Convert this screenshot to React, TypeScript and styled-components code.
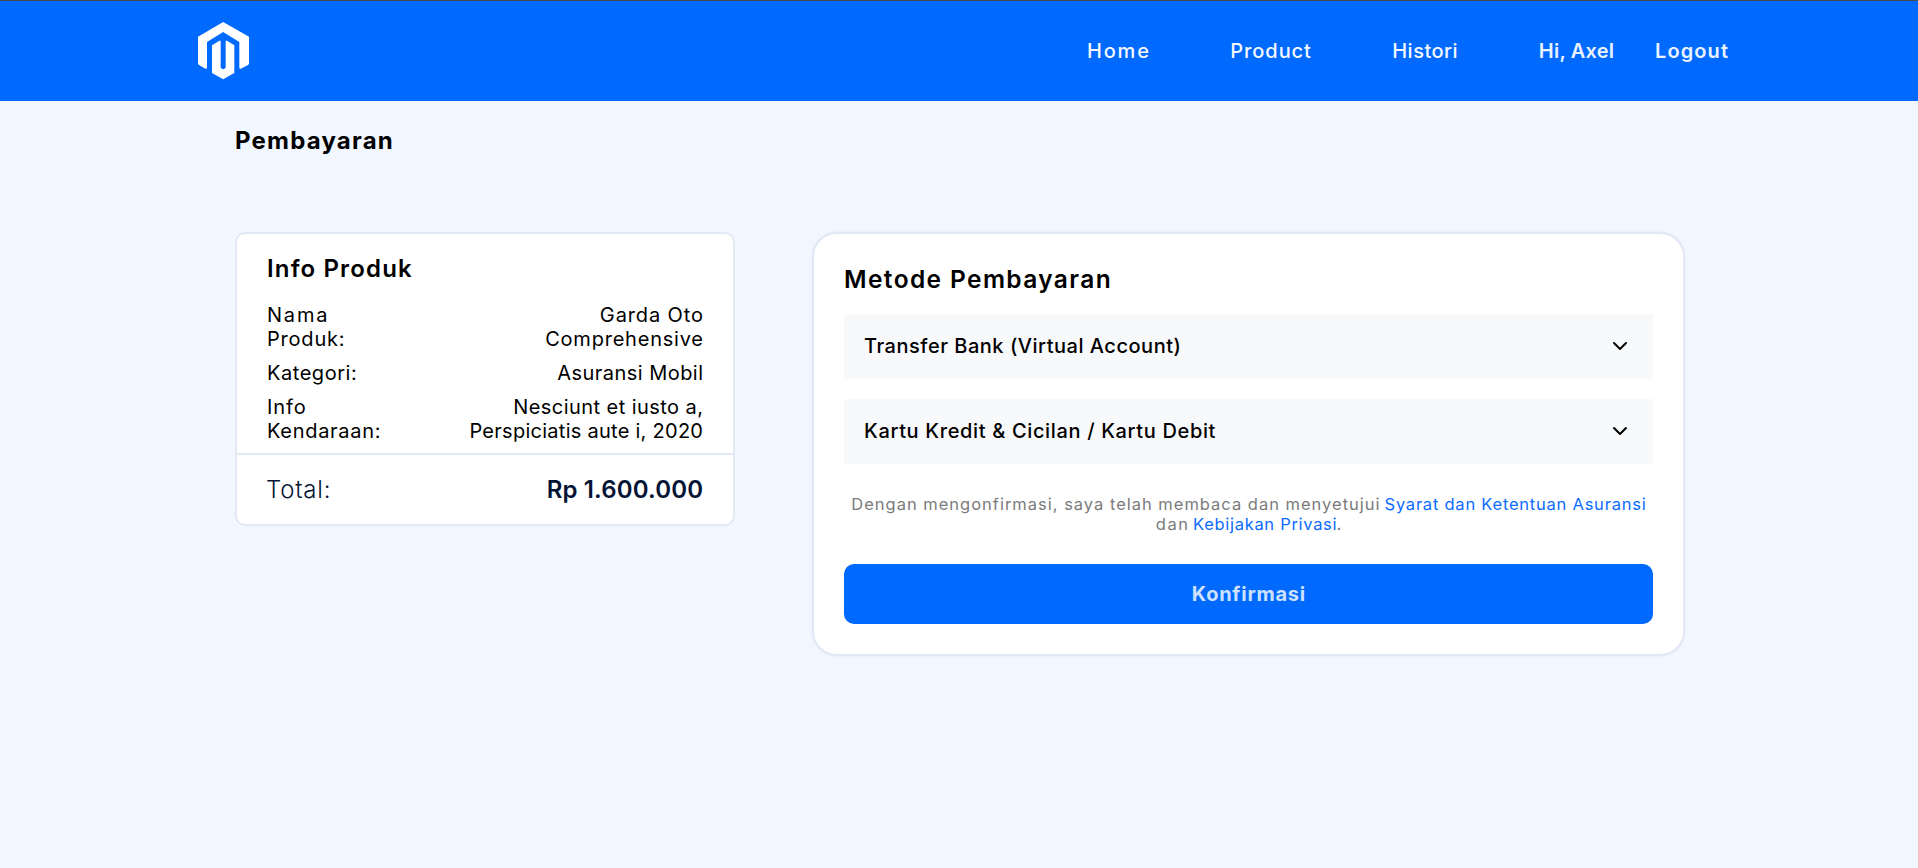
import React from 'react';
import styled, { createGlobalStyle } from 'styled-components';
import { ChevronDown } from 'lucide-react';

const GlobalStyle = createGlobalStyle`
  *, *::before, *::after { box-sizing: border-box; }
  body {
    margin: 0;
    min-height: 100vh;
    background: #f1f6ff;
    color: #000;
    font-family: Inter, sans-serif;
    font-size: 20px;
    line-height: 24px;
  }
`;

/* Letter-spaced text; the negative margin cancels the space after the last glyph. */
const Text = styled.span<{ $track: number }>`
  letter-spacing: ${(p) => p.$track}px;
  margin-right: ${(p) => -p.$track}px;
  white-space: nowrap;
`;

const Header = styled.header`
  display: flex;
  align-items: center;
  justify-content: space-between;
  height: 101px;
  padding: 0 190px 0 198px;
  border-top: 1px solid #444a50;
  background: #006aff;
`;

const LogoMark = styled.svg`
  display: block;
  width: 51px;
  height: 57.3px;
`;

const Nav = styled.nav`
  display: flex;
  align-items: center;
  gap: 81.3px;
`;

const Account = styled.div`
  display: flex;
  gap: 41px;
`;

const NavLink = styled.a<{ $strong?: boolean }>`
  color: ${(p) => (p.$strong ? '#eaf2ff' : '#f5f9ff')};
  font-weight: ${(p) => (p.$strong ? 600 : 500)};
  text-decoration: none;
`;

const Main = styled.main`
  padding: 25px 233px 0 235px;
`;

const PageTitle = styled.h1`
  margin: 0 0 77px;
  font-size: 24px;
  font-weight: 700;
  line-height: 29px;
`;

const Columns = styled.div`
  display: grid;
  grid-template-columns: 500px 1fr;
  align-items: start;
  gap: 77px;
`;

const ProductCard = styled.section`
  border: 2px solid #e2e9f5;
  border-radius: 10px;
  background: #fff;
`;

const ProductBody = styled.div`
  display: flex;
  flex-direction: column;
  gap: 10px;
  padding: 20px 30px 10px;
`;

const CardTitle = styled.h2`
  margin: 0 0 10px;
  font-size: 24px;
  font-weight: 600;
  line-height: 29px;
`;

const InfoRow = styled.div`
  display: flex;
  justify-content: space-between;
`;

const Lines = styled.div<{ $end?: boolean }>`
  display: flex;
  flex-direction: column;
  align-items: ${(p) => (p.$end ? 'flex-end' : 'flex-start')};
`;

const TotalRow = styled.div`
  display: flex;
  justify-content: space-between;
  padding: 20px 30px 20px 29px;
  border-top: 2px solid #e2e9f5;
  color: #041434;
  font-size: 24px;
  font-weight: 300;
  line-height: 29px;
`;

const Amount = styled.strong`
  font-weight: 600;
`;

const PaymentCard = styled.section`
  padding: 30px;
  border: 2px solid #e2e9f4;
  border-radius: 25px;
  background: #fff;
  box-shadow: 0 0 2px #dfe7f3;
`;

const PaymentTitle = styled.h2`
  margin: 0 0 20px;
  font-size: 24.5px;
  font-weight: 600;
  line-height: 30px;
`;

const Methods = styled.div`
  display: flex;
  flex-direction: column;
  gap: 20px;
`;

const Method = styled.button`
  display: flex;
  align-items: center;
  justify-content: space-between;
  height: 65px;
  padding: 0 21px 1px 20px;
  border: 0;
  background: #f8f9fb;
  color: #000;
  font: inherit;
  font-weight: 500;
`;

const Terms = styled.p`
  display: flex;
  flex-direction: column;
  align-items: center;
  margin: 30px 0;
  color: #7b7b7b;
  font-size: 16.5px;
  line-height: 20px;
`;

const TermsLine = styled.span`
  display: flex;
  gap: 5px;
`;

const TermsLink = styled.a`
  color: #0b6cff;
`;

const Confirm = styled.button`
  width: 100%;
  height: 60px;
  border: 0;
  border-radius: 10px;
  background: #006aff;
  color: #cce1ff;
  font: inherit;
  font-weight: 700;
`;

type Line = [text: string, track: number];

const links: Line[] = [['Home', 1.8], ['Product', 0.95], ['Histori', 0.48]];
const accountLinks: Line[] = [['Hi, Axel', 0.2], ['Logout', 1.1]];

const info: { label: Line[]; value: Line[] }[] = [
  {
    label: [['Nama', 1.8], ['Produk:', 0.8]],
    value: [['Garda Oto', 0.88], ['Comprehensive', 0.78]],
  },
  { label: [['Kategori:', 0.54]], value: [['Asuransi Mobil', 0.46]] },
  {
    label: [['Info', 0.9], ['Kendaraan:', 0.7]],
    value: [['Nesciunt et iusto a,', 0.44], ['Perspiciatis aute i, 2020', 0.27]],
  },
];

const methods: Line[] = [
  ['Transfer Bank (Virtual Account)', 0.52],
  ['Kartu Kredit & Cicilan / Kartu Debit', 0.65],
];

function LineStack({ lines, end }: { lines: Line[]; end?: boolean }) {
  return (
    <Lines $end={end}>
      {lines.map(([text, track]) => (
        <Text key={text} $track={track}>{text}</Text>
      ))}
    </Lines>
  );
}

function Logo() {
  return (
    <LogoMark viewBox="54 68 153 172" fill="#fff" aria-hidden="true">
      <path d="M129.5 68 207 112V192Q207 195 204 197L184 207.500Q178 210 178 205V128L129.500 98 81 128V205Q81 210 75 207.500L57 197Q54 195 54 192V112Z" />
      <path d="M96 138 118 124.500Q122 122.500 122 127V205Q129.500 214 137 205V127Q137 122.500 141 124.500L163 138V221L129.500 240 96 221Z" />
    </LogoMark>
  );
}

export default function App() {
  return (
    <>
      <GlobalStyle />
      <Header>
        <Logo />
        <Nav>
          {links.map(([text, track]) => (
            <NavLink key={text}><Text $track={track}>{text}</Text></NavLink>
          ))}
          <Account>
            {accountLinks.map(([text, track]) => (
              <NavLink key={text} $strong><Text $track={track}>{text}</Text></NavLink>
            ))}
          </Account>
        </Nav>
      </Header>
      <Main>
        <PageTitle><Text $track={1.2}>Pembayaran</Text></PageTitle>
        <Columns>
          <ProductCard>
            <ProductBody>
              <CardTitle><Text $track={1.15}>Info Produk</Text></CardTitle>
              {info.map((row) => (
                <InfoRow key={row.label[0][0]}>
                  <LineStack lines={row.label} />
                  <LineStack lines={row.value} end />
                </InfoRow>
              ))}
            </ProductBody>
            <TotalRow>
              <Text $track={0.8}>Total:</Text>
              <Amount><Text $track={0.15}>Rp 1.600.000</Text></Amount>
            </TotalRow>
          </ProductCard>
          <PaymentCard>
            <PaymentTitle><Text $track={1.38}>Metode Pembayaran</Text></PaymentTitle>
            <Methods>
              {methods.map(([text, track]) => (
                <Method key={text}>
                  <Text $track={track}>{text}</Text>
                  <ChevronDown size={24} strokeWidth={2} />
                </Method>
              ))}
            </Methods>
            <Terms>
              <TermsLine>
                <Text $track={0.99}>Dengan mengonfirmasi, saya telah membaca dan menyetujui</Text>
                <TermsLink><Text $track={0.77}>Syarat dan Ketentuan Asuransi</Text></TermsLink>
              </TermsLine>
              <TermsLine>
                <Text $track={1.6}>dan</Text>
                <span>
                  <TermsLink><Text $track={0.7}>Kebijakan Privasi</Text></TermsLink>.
                </span>
              </TermsLine>
            </Terms>
            <Confirm><Text $track={0.74}>Konfirmasi</Text></Confirm>
          </PaymentCard>
        </Columns>
      </Main>
    </>
  );
}
